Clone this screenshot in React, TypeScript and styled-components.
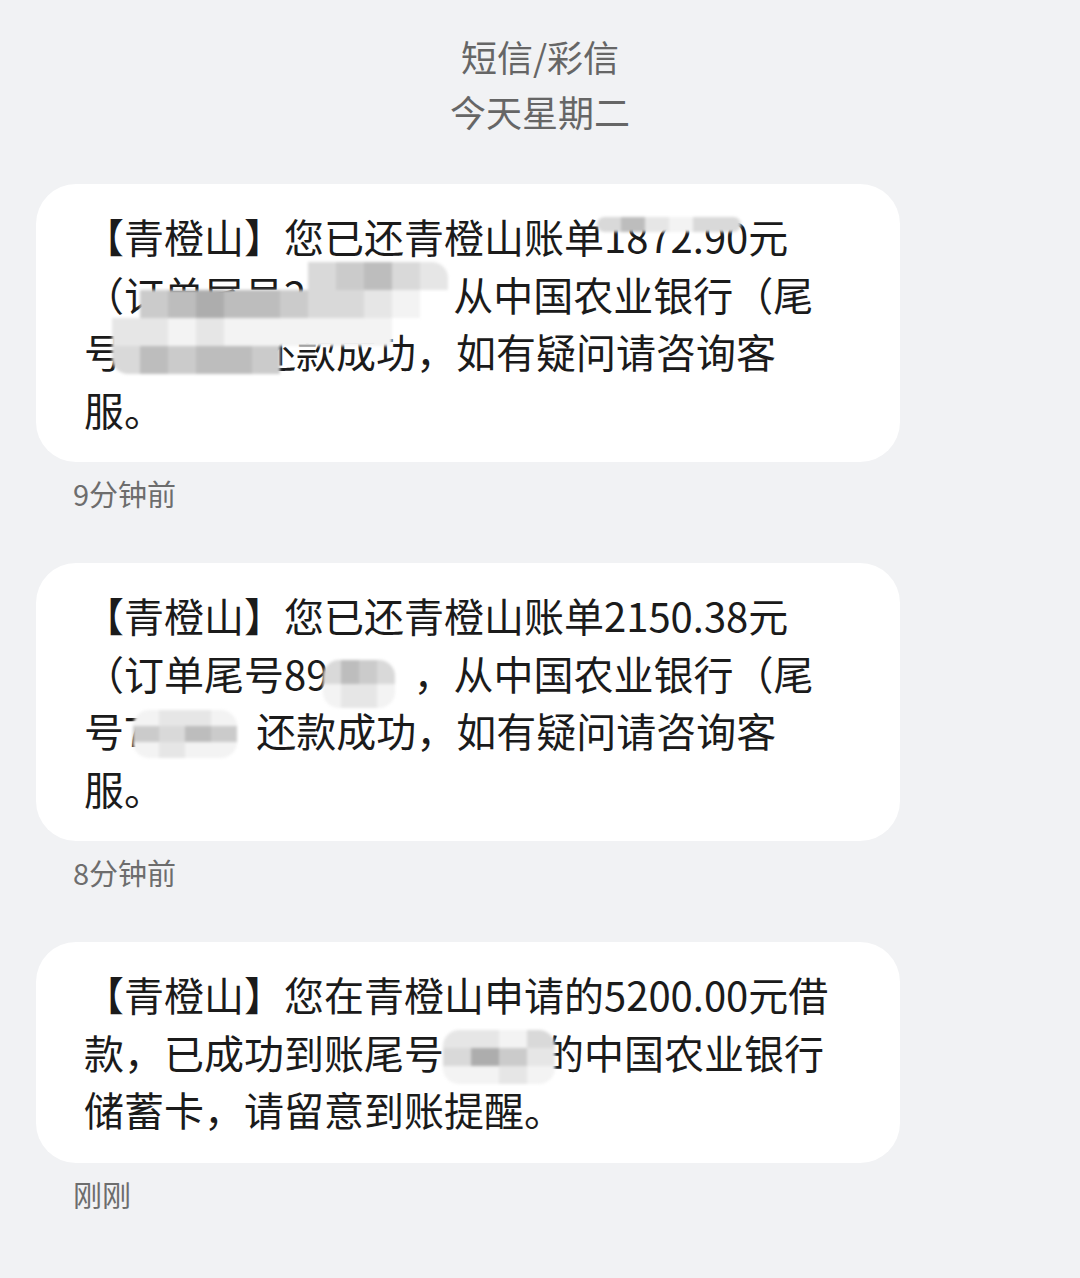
import React from "react";
import styled, { createGlobalStyle } from "styled-components";

const Global = createGlobalStyle`
  html, body { margin: 0; padding: 0; background: #f1f2f4; }
  body { font-family: "Noto Sans CJK SC", "Noto Sans", sans-serif; }
`;

const Page = styled.div`
  width: 1080px;
  min-height: 1278px;
  box-sizing: border-box;
  padding-top: 29px;
  background: #f1f2f4;
`;

const Header = styled.header`
  text-align: center;
  color: #666666;
  font-size: 36px;
  line-height: 55px;
`;

const Thread = styled.main`
  display: flex;
  flex-direction: column;
  padding: 45px 180px 0 36px;
`;

const Group = styled.section`
  display: flex;
  flex-direction: column;
  margin-bottom: 53px;
`;

const Bubble = styled.div`
  position: relative;
  background: #ffffff;
  border-radius: 40px;
  padding: 24px 48px;
  font-size: 40px;
  line-height: 57.5px;
  color: #1b1b1b;
  white-space: nowrap;
  overflow: hidden;
`;

const Hidden = styled.span<{ $w: number }>`
  display: inline-block;
  width: ${(p) => p.$w}px;
`;

const Time = styled.div`
  margin: 14px 0 0 37px;
  font-size: 29px;
  line-height: 34px;
  color: #6d6d6d;
`;

const MosaicGrid = styled.div<{ $x: number; $y: number; $cols: number; $cw: number; $ch: number }>`
  position: absolute;
  left: ${(p) => p.$x}px;
  top: ${(p) => p.$y}px;
  display: grid;
  grid-template-columns: repeat(${(p) => p.$cols}, ${(p) => p.$cw}px);
  grid-auto-rows: ${(p) => p.$ch}px;
  border-radius: 16px;
  overflow: hidden;
  filter: blur(1.4px);
  pointer-events: none;
`;

const Cell = styled.span<{ $shade: string }>`
  background: ${(p) => p.$shade};
`;

const SHADES: Record<string, string> = {
  ".": "transparent",
  "0": "#f3f3f3",
  "1": "#e6e6e6",
  "2": "#d9d9d9",
  "3": "#cbcbcb",
  "4": "#bdbdbd",
  "5": "#adadad",
};

function Mosaic({ x, y, cw, ch, rows }: { x: number; y: number; cw: number; ch: number; rows: string[] }) {
  const cols = rows[0].length;
  return (
    <MosaicGrid $x={x} $y={y} $cols={cols} $cw={cw} $ch={ch} aria-hidden>
      {rows.flatMap((r, ri) =>
        r.split("").map((c, ci) => <Cell key={`${ri}-${ci}`} $shade={SHADES[c]} />)
      )}
    </MosaicGrid>
  );
}

export default function App() {
  return (
    <Page>
      <Global />
      <Header>
        <div>短信/彩信</div>
        <div>今天星期二</div>
      </Header>
      <Thread>
        <Group>
          <Bubble>
            【青橙山】您已还青橙山账单1872.90元
            <br />
            （订单尾号2<Hidden $w={147} />从中国农业银行（尾
            <br />
            号<Hidden $w={132} />还款成功，如有疑问请咨询客
            <br />
            服。
            <Mosaic x={561} y={33} cw={24} ch={15} rows={["241022"]} />
            <Mosaic
              x={76}
              y={78}
              cw={28}
              ch={28}
              rows={[".......23421", ".3454432210.", "1101000000..", "243443......"]}
            />
          </Bubble>
          <Time>9分钟前</Time>
        </Group>
        <Group>
          <Bubble>
            【青橙山】您已还青橙山账单2150.38元
            <br />
            （订单尾号89<Hidden $w={85} />，从中国农业银行（尾
            <br />
            号7<Hidden $w={110} />还款成功，如有疑问请咨询客
            <br />
            服。
            <Mosaic x={287} y={97} cw={18} ch={24} rows={["2432", "0110"]} />
            <Mosaic x={97} y={147} cw={26} ch={16} rows={["0110", "3243", "0100"]} />
          </Bubble>
          <Time>8分钟前</Time>
        </Group>
        <Group>
          <Bubble>
            【青橙山】您在青橙山申请的5200.00元借
            <br />
            款，已成功到账尾号<Hidden $w={100} />的中国农业银行
            <br />
            储蓄卡，请留意到账提醒。
            <Mosaic x={407} y={88} cw={28} ch={18} rows={["1102", "2531", "0010"]} />
          </Bubble>
          <Time>刚刚</Time>
        </Group>
      </Thread>
    </Page>
  );
}
